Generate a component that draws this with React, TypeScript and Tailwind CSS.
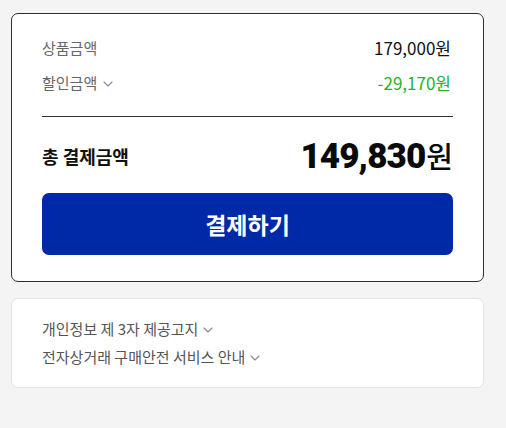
import React from "react";

const KR = { fontFamily: '"Noto Sans CJK KR", "Noto Sans", sans-serif' };

function Chevron({ className = "" }: { className?: string }) {
  return (
    <svg width="10" height="6" viewBox="0 0 10 6" className={className} fill="none">
      <path d="M1 1L5 5L9 1" stroke="#8a8a8a" strokeWidth="1.1" strokeLinecap="round" strokeLinejoin="round" />
    </svg>
  );
}

export default function App() {
  return (
    <div className="min-h-[428px] w-full bg-[#f4f4f4] pt-[13px]" style={KR}>
      <div className="ml-[11px] w-[473px]">
        <div className="rounded-[7px] border border-[#2f2f2f] bg-white px-[30px] pt-[22px] pb-[26px]">
          <div className="flex h-6 items-center justify-between">
            <span className="text-[15px] text-[#666666]">상품금액</span>
            <span className="mr-[2px] text-[17px] text-[#111111]">179,000원</span>
          </div>
          <div className="mt-[11px] flex h-6 items-center justify-between">
            <span className="flex items-center gap-[6px] text-[15px] text-[#666666]">
              할인금액
              <Chevron className="mt-[1px]" />
            </span>
            <span className="mr-[2px] text-[17px] text-[#26b326]">-29,170원</span>
          </div>
          <div className="mt-[21px] h-px bg-[#333333]" />
          <div className="mt-[19px] flex h-[40px] items-center justify-between">
            <span className="text-[18px] font-bold text-[#111111]">총 결제금액</span>
            <span className="flex items-baseline text-[#0a0a0a]">
              <span
                className="text-[35px] font-black leading-none tracking-[-0.9px]"
                style={{ fontFamily: 'Roboto, "Liberation Sans", sans-serif' }}
              >
                149,830
              </span>
              <span className="ml-[1px] text-[29px] font-medium leading-none">원</span>
            </span>
          </div>
          <button className="mt-[17px] flex h-[62px] w-full items-center justify-center rounded-[7px] bg-[#0029a8] text-[23px] font-bold text-white">
            결제하기
          </button>
        </div>
        <div className="mt-4 rounded-[7px] border border-[#e4e4e4] bg-white px-[30px] pt-[18px] pb-[18px]">
          <div className="flex h-6 items-center gap-[5px] text-[15px] text-[#555555]">
            개인정보 제 3자 제공고지
            <Chevron className="mt-[1px]" />
          </div>
          <div className="mt-1 flex h-6 items-center gap-[5px] text-[15px] text-[#555555]">
            전자상거래 구매안전 서비스 안내
            <Chevron className="mt-[1px]" />
          </div>
        </div>
      </div>
    </div>
  );
}
